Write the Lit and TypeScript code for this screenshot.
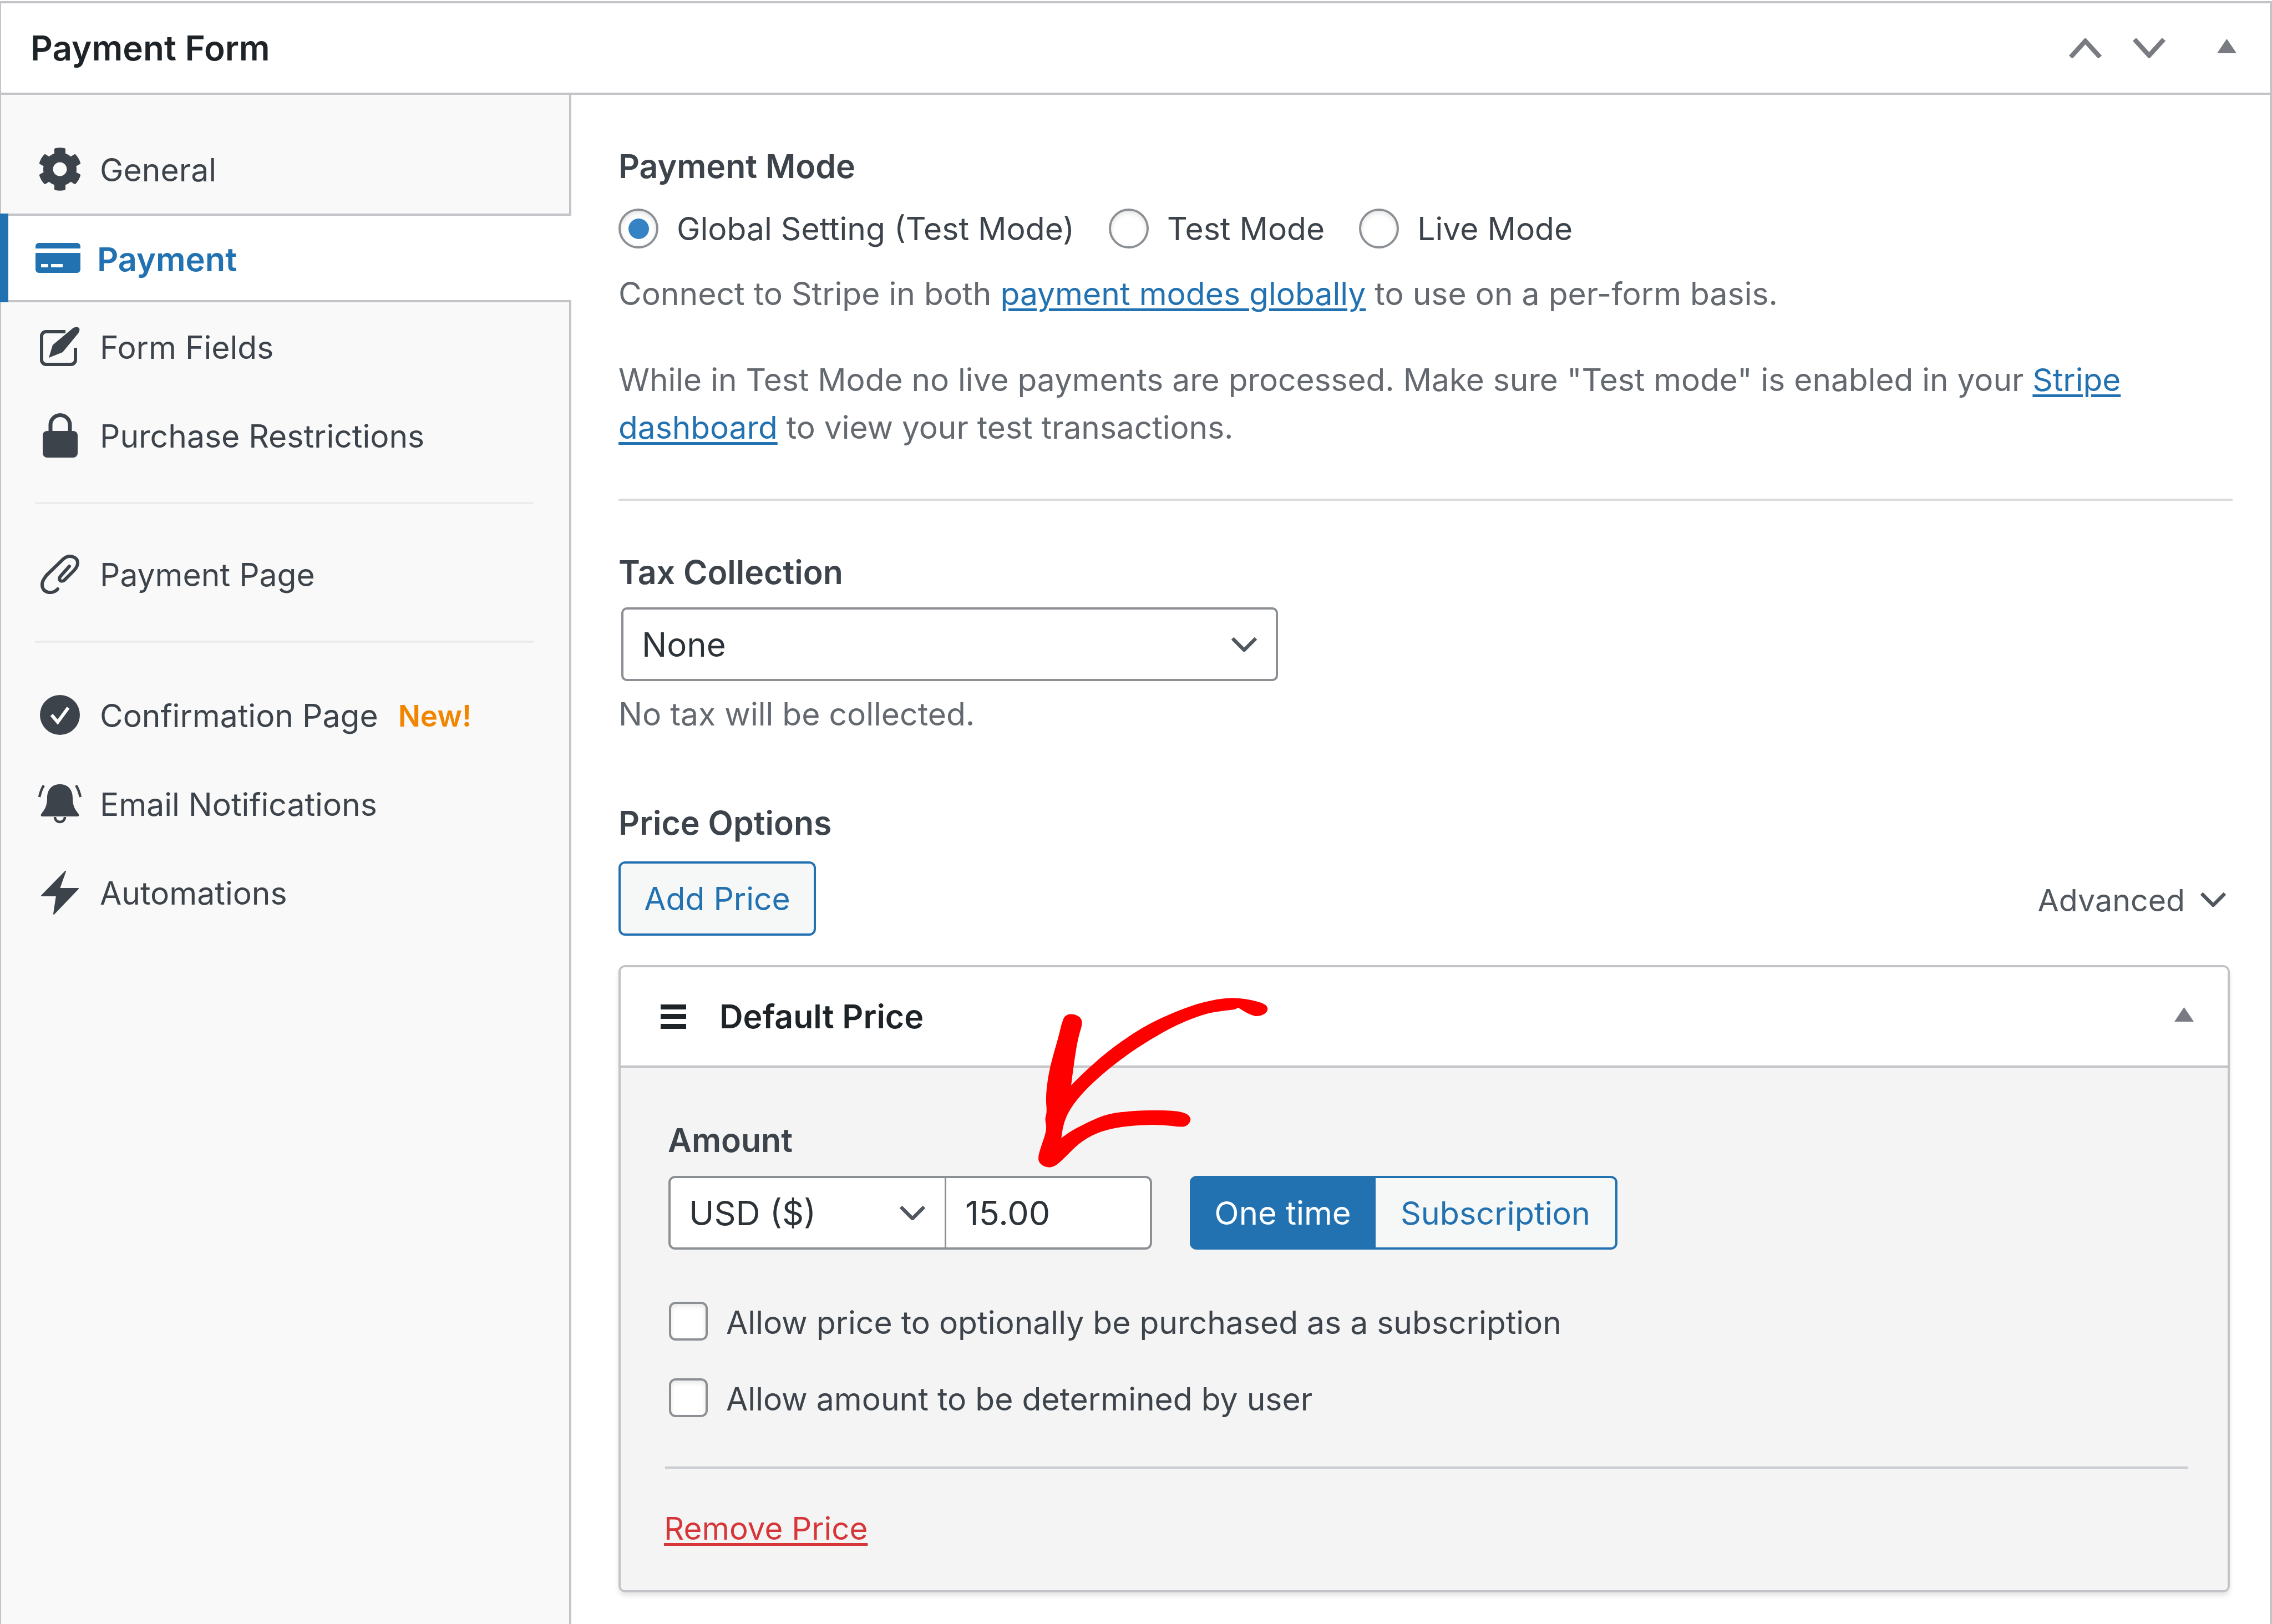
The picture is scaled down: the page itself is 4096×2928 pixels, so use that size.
import { LitElement, html, css, svg } from "lit";
import { customElement } from "lit/decorators.js";

// Red hand-drawn arrow outline, traced from the reference. A point listed twice stays a sharp corner.
const ARROW: [number, number][] = [
  [1500, 275], [1503, 310], [1482, 335], [1460, 322], [1436, 290], [1436, 290], [1428, 300], [1400, 305], [1360, 320], [1300, 370],
  [1240, 440], [1180, 525], [1130, 610], [1090, 690], [1060, 770], [1045, 840], [1040, 912], [1040, 912],
  [1060, 880], [1100, 835], [1145, 795], [1200, 782], [1260, 778], [1315, 785], [1333, 820], [1320, 858],
  [1300, 858], [1275, 850], [1230, 848], [1170, 858], [1120, 885], [1080, 935], [1050, 1000], [1025, 1050],
  [1005, 1052], [990, 1030], [988, 1000], [995, 950], [1008, 870], [1003, 820], [1008, 790], [1005, 720],
  [1010, 620], [1020, 530], [1035, 420], [1040, 370], [1048, 325], [1070, 318], [1090, 350], [1078, 430],
  [1070, 530], [1062, 660], [1062, 660], [1100, 580], [1160, 470], [1240, 360], [1330, 280], [1390, 248], [1430, 242],
  [1470, 255],
];

function smoothClosed(pts: [number, number][]): string {
  const mid = (a: [number, number], b: [number, number]) => [(a[0] + b[0]) / 2, (a[1] + b[1]) / 2];
  const n = pts.length;
  const s = mid(pts[n - 1], pts[0]);
  let d = `M${s[0]} ${s[1]}`;
  for (let i = 0; i < n; i++) {
    const m = mid(pts[i], pts[(i + 1) % n]);
    d += `Q${pts[i][0]} ${pts[i][1]} ${m[0]} ${m[1]}`;
  }
  return d + "Z";
}

const gear = html`<svg width="80" height="80" viewBox="0 0 512 512"><path fill="#3c434a" d="M487.4 315.7l-42.6-24.6c4.3-23.2 4.3-47 0-70.2l42.6-24.6c4.9-2.8 7.1-8.6 5.5-14-11.1-35.6-30-67.8-54.7-94.6-3.8-4.1-10-5.1-14.8-2.3L380.8 110c-17.9-15.4-38.5-27.3-60.8-35.1V25.8c0-5.6-3.9-10.5-9.4-11.7-36.7-8.2-74.3-7.8-109.2 0-5.5 1.2-9.4 6.1-9.4 11.7V75c-22.2 7.9-42.8 19.8-60.8 35.1L88.7 85.5c-4.9-2.8-11-1.9-14.8 2.3-24.7 26.7-43.6 58.9-54.7 94.6-1.7 5.4.6 11.2 5.5 14L67.3 221c-4.3 23.2-4.3 47 0 70.2l-42.6 24.6c-4.9 2.8-7.1 8.6-5.5 14 11.1 35.6 30 67.8 54.7 94.6 3.8 4.1 10 5.1 14.8 2.3l42.6-24.6c17.9 15.4 38.5 27.3 60.8 35.1v49.2c0 5.6 3.9 10.5 9.4 11.7 36.7 8.2 74.3 7.8 109.2 0 5.5-1.2 9.4-6.1 9.4-11.7v-49.2c22.2-7.9 42.8-19.8 60.8-35.1l42.6 24.6c4.9 2.8 11 1.9 14.8-2.3 24.7-26.7 43.6-58.9 54.7-94.6 1.5-5.5-.7-11.3-5.6-14.1zM256 336c-44.1 0-80-35.9-80-80s35.9-80 80-80 80 35.9 80 80-35.9 80-80 80z"/></svg>`;
const card = html`<svg width="81" height="54" viewBox="0 0 81 54"><path fill="#2271b1" fill-rule="evenodd" d="M6 0H75a6 6 0 0 1 6 6V10H0V6a6 6 0 0 1 6-6ZM0 18H81V48a6 6 0 0 1-6 6H6a6 6 0 0 1-6-6ZM10 38v6H23v-6ZM28 38v6H49v-6Z"/></svg>`;
const edit = html`<svg width="72" height="72" viewBox="0 0 72 72"><path fill="none" stroke="#3c434a" stroke-width="6" d="M46 9H11a8 8 0 0 0-8 8V60a8 8 0 0 0 8 8H56a8 8 0 0 0 8-8V38"/><path fill="#3c434a" d="M16 56 23 33 59 3C63 0 69 0 71 3 72 6 71 9 69 12L41 46Z"/></svg>`;
const lock = html`<svg width="63" height="80" viewBox="0 0 63 80"><path fill="none" stroke="#3c434a" stroke-width="7" d="M14 36V21a17.5 17.5 0 0 1 35 0V36"/><rect y="32" width="63" height="48" rx="8" fill="#3c434a"/></svg>`;
const clip = html`<svg width="72" height="72" viewBox="0 0 72 72"><path fill="none" stroke="#3c434a" stroke-width="6" stroke-linecap="round" d="M32 63C22 74 3 70 4 54 4 48 8 44 12 38L42 9C52 0 68 4 68 16 68 22 64 27 60 31L44 47C38 52 32 46 37 40L53 22"/></svg>`;
const check = html`<svg width="72" height="72" viewBox="0 0 72 72"><circle cx="36" cy="36" r="36" fill="#3c434a"/><path fill="none" stroke="#fff" stroke-width="6" d="M21 36 32 49 51 23"/></svg>`;
const bell = html`<svg width="80" height="71" viewBox="0 0 80 71"><path fill="#3c434a" d="M40 0C25 0 17 10 17 25 17 40 12 46 6 54 5 56 6 58 8 58H72C74 58 75 56 74 54 68 46 63 40 63 25 63 10 55 0 40 0Z"/><path fill="none" stroke="#3c434a" stroke-width="4.500" d="M31 59a9 9 0 0 0 18 0M11 2C7 8 5 14 3 23M69 2C73 8 75 14 77 23"/></svg>`;
const bolt = html`<svg width="68" height="79" viewBox="0 0 68 79"><path fill="#3c434a" stroke="#3c434a" stroke-width="2" stroke-linejoin="round" d="M44 1 1 45H28L23 78 67 32H33Z"/></svg>`;

const chevUp = html`<svg width="61" height="36" viewBox="0 0 61 36"><path fill="none" stroke="#787c82" stroke-width="8.500" d="M4 34 30.500 5 57 34"/></svg>`;
const chevDown = html`<svg width="61" height="36" viewBox="0 0 61 36"><path fill="none" stroke="#787c82" stroke-width="8.500" d="M4 2 30.500 31 57 2"/></svg>`;
const tri = html`<svg width="35" height="26" viewBox="0 0 35 26"><path fill="#787c82" d="M17.500 0 35 26H0Z"/></svg>`;
const selChev = html`<svg width="46" height="26" viewBox="0 0 46 26"><path fill="none" stroke="#50575e" stroke-width="6.500" d="M2 2 23 23 44 2"/></svg>`;

@customElement("app-root")
export class AppRoot extends LitElement {
  static styles = css`
    :host { display: block; position: relative; width: 4096px; height: 2928px; overflow: hidden; background: #fff;
      font-family: Inter, "Liberation Sans", sans-serif; font-size: 57px; color: #3c434a; }
    * { box-sizing: border-box; }
    .box { margin-top: 2px; height: 2926px; border-top: 4px solid #c3c4c7; border-left: 2px solid #c3c4c7; border-right: 4px solid #c3c4c7; display: flex; flex-direction: column; }
    .head { height: 165px; flex: none; border-bottom: 4px solid #c3c4c7; display: flex; align-items: center; justify-content: space-between; padding: 0 60px 0 53px; }
    .title { font-size: 62px; font-weight: 600; color: #1d2327; line-height: 60px; }
    .acts { display: flex; align-items: center; }
    .acts svg { display: block; }
    .acts .down { margin-left: 54px; }
    .acts .tri { margin: -7px 0 0 92px; }
    .cols { flex: 1; display: flex; min-height: 0; }
    .side { width: 1028px; flex: none; background: #f9f9f9; border-right: 4px solid #c3c4c7; padding-top: 54px; }
    .item { height: 160px; display: flex; align-items: center; position: relative; }
    .item > span:not(.slot) { padding-top: 3px; }
    .slot { width: 104px; margin-left: 54px; margin-right: 20px; display: flex; justify-content: center; flex: none; }
    .slot svg { display: block; }
    .item.active { background: #fff; color: #2271b1; font-weight: 600; font-size: 59.500px; margin-right: -4px; border-top: 4px solid #c3c4c7; border-bottom: 4px solid #c3c4c7; }
    .item.active .slot { margin-left: 50px; margin-right: 19px; }
    .item.active::before { content: ""; position: absolute; left: -2px; top: -4px; bottom: -4px; width: 15px; background: #2271b1; }
    .item > .new { color: #f18500; font-weight: 600; font-size: 53px; margin-left: 36px; }
    .sep { height: 4px; background: #ececec; margin: 40px 64px 46px 61px; }
    .sep.b { margin-bottom: 50px; }
    .main { flex: 1; min-width: 0; padding: 99px 67px 0 85px; }
    .h { font-weight: 600; font-size: 59px; line-height: 60px; }
    .radios { display: flex; align-items: center; margin-top: 46px; height: 72px; }
    .radio { width: 72px; height: 72px; border-radius: 50%; border: 4px solid #8c8f94; background: #fff; box-shadow: inset 0 4px 8px rgba(0,0,0,.1); display: flex; align-items: center; justify-content: center; flex: none; }
    .radio i { width: 37px; height: 37px; border-radius: 50%; background: #3582c4; display: block; }
    .radio-label { margin-left: 33px; }
    .r2 { margin-left: 62px; }
    p { margin: 0; color: #646970; line-height: 86px; }
    a { color: #2271b1; text-decoration-thickness: 4.500px; text-underline-offset: 6px; }
    .p1 { margin-top: 39px; }
    .p2 { margin-top: 69px; font-size: 56.800px; }
    hr { border: 0; height: 4px; background: #dcdcde; margin: 0; }
    .hr1 { margin-top: 85px; }
    .m99 { margin-top: 99px; }
    .select { margin: 33px 0 0 5px; width: 1184px; height: 133px; border: 4px solid #8c8f94; border-radius: 10px; background: #fff; display: flex; align-items: center; justify-content: space-between; padding: 0 34px 0 33px; color: #2c3338; font-size: 60px; }
    .help { margin-top: 17px; }
    .m123 { margin-top: 123px; }
    .addrow { margin-top: 39px; display: flex; align-items: center; justify-content: space-between; padding-right: 12px; }
    .add { width: 356px; height: 134px; border: 4px solid #2271b1; border-radius: 12px; background: #f6f7f7; color: #2271b1; display: flex; align-items: center; justify-content: center; }
    .adv { display: flex; align-items: center; color: #50575e; gap: 28px; font-size: 55.500px; margin-top: 4px; }
    .card { margin: 53px 5px 0 0; border: 4px solid #c3c4c7; border-radius: 12px; height: 1131px; box-shadow: 0 6px 8px rgba(0,0,0,.1); overflow: hidden; }
    .chead { height: 181px; background: #fff; border-bottom: 4px solid #c3c4c7; display: flex; align-items: center; padding: 0 61px 0 72px; }
    .chead svg { margin-top: -7px; }
    .burger { width: 46px; height: 44px; display: flex; flex-direction: column; justify-content: space-between; margin-right: 60px; }
    .burger i { display: block; height: 9px; background: #1d2327; }
    .ctitle { flex: 1; font-weight: 600; font-size: 59px; color: #1d2327; }
    .cbody { background: #f4f4f4; height: 942px; padding: 101px 72px 0 80px; }
    .amount { padding-left: 5px; }
    .fields { display: flex; margin-top: 34px; padding-left: 6px; }
    .group { width: 872px; height: 133px; border: 4px solid #8c8f94; border-radius: 12px; background: #fff; display: flex; align-items: center; color: #2c3338; font-size: 61px; }
    .cur { width: 497px; height: 100%; border-right: 3px solid #8c8f94; display: flex; align-items: center; justify-content: space-between; padding: 0 35px 0 33px; }
    .val { padding-left: 34px; }
    .toggle { display: flex; margin-left: 68px; height: 133px; }
    .on { width: 335px; background: #2271b1; color: #fff; border-radius: 12px 0 0 12px; display: flex; align-items: center; justify-content: center; font-size: 58px; }
    .off { width: 436px; background: #f6f7f7; color: #2271b1; border: 4px solid #2271b1; border-left: 0; border-radius: 0 12px 12px 0; display: flex; align-items: center; justify-content: center; font-size: 57.500px; }
    .chk { display: flex; align-items: center; height: 70px; padding-left: 7px; }
    .chk span { padding-top: 4px; }
    .chk i { display: block; width: 70px; height: 70px; border: 4px solid #8c8f94; border-radius: 12px; background: #fff; box-shadow: inset 0 4px 8px rgba(0,0,0,.1); flex: none; margin-right: 33px; }
    .c1 { margin-top: 94px; }
    .c2 { margin-top: 68px; }
    .hr2 { margin-top: 89px; background: #c9ccd0; }
    .rem { display: block; margin-top: 78px; margin-left: -2px; line-height: 60px; color: #d63638; font-size: 56.500px; }
    .arrow { position: absolute; left: 1865px; top: 1794px; display: block; }
  `;

  private row(icon: unknown, label: string, extra?: unknown, active = false) {
    return html`<div class="item ${active ? "active" : ""}"><span class="slot">${icon}</span><span>${label}</span>${extra ?? ""}</div>`;
  }

  render() {
    return html`
      <div class="box">
        <div class="head">
          <div class="title">Payment Form</div>
          <div class="acts"><span>${chevUp}</span><span class="down">${chevDown}</span><span class="tri">${tri}</span></div>
        </div>
        <div class="cols">
          <div class="side">
            ${this.row(gear, "General")}
            ${this.row(card, "Payment", undefined, true)}
            ${this.row(edit, "Form Fields")}
            ${this.row(lock, "Purchase Restrictions")}
            <div class="sep"></div>
            ${this.row(clip, "Payment Page")}
            <div class="sep b"></div>
            ${this.row(check, "Confirmation Page", html`<span class="new">New!</span>`)}
            ${this.row(bell, "Email Notifications")}
            ${this.row(bolt, "Automations")}
          </div>
          <div class="main">
            <div class="h">Payment Mode</div>
            <div class="radios">
              <span class="radio"><i></i></span><span class="radio-label">Global Setting (Test Mode)</span>
              <span class="radio r2"></span><span class="radio-label">Test Mode</span>
              <span class="radio r2"></span><span class="radio-label">Live Mode</span>
            </div>
            <p class="p1">Connect to Stripe in both <a href="#">payment modes globally</a> to use on a per-form basis.</p>
            <p class="p2">While in Test Mode no live payments are processed. Make sure "Test mode" is enabled in your <a href="#">Stripe</a><br /><a href="#">dashboard</a> to view your test transactions.</p>
            <hr class="hr1" />
            <div class="h m99">Tax Collection</div>
            <div class="select"><span>None</span>${selChev}</div>
            <p class="help">No tax will be collected.</p>
            <div class="h m123">Price Options</div>
            <div class="addrow">
              <div class="add">Add Price</div>
              <div class="adv"><span>Advanced</span>${selChev}</div>
            </div>
            <div class="card">
              <div class="chead">
                <span class="burger"><i></i><i></i><i></i></span>
                <span class="ctitle">Default Price</span>
                ${tri}
              </div>
              <div class="cbody">
                <div class="h amount">Amount</div>
                <div class="fields">
                  <div class="group">
                    <div class="cur"><span>USD ($)</span>${selChev}</div>
                    <div class="val">15.00</div>
                  </div>
                  <div class="toggle"><div class="on">One time</div><div class="off">Subscription</div></div>
                </div>
                <div class="chk c1"><i></i><span>Allow price to optionally be purchased as a subscription</span></div>
                <div class="chk c2"><i></i><span>Allow amount to be determined by user</span></div>
                <hr class="hr2" />
                <a class="rem" href="#">Remove Price</a>
              </div>
            </div>
          </div>
        </div>
      </div>
      <svg class="arrow" width="435" height="314" viewBox="980 230 540 830" preserveAspectRatio="none">
        ${svg`<path fill="#ff0000" d=${smoothClosed(ARROW)} />`}
      </svg>
    `;
  }
}
